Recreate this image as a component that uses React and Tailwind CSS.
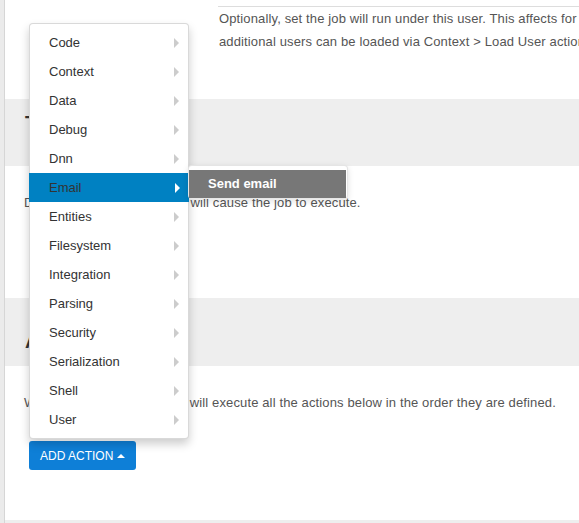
const MENU = [
  "Code",
  "Context",
  "Data",
  "Debug",
  "Dnn",
  "Email",
  "Entities",
  "Filesystem",
  "Integration",
  "Parsing",
  "Security",
  "Serialization",
  "Shell",
  "User",
];

const ACTIVE = "Email";

function Caret({ active }) {
  return (
    <span
      className={`absolute right-[9px] top-1/2 -translate-y-1/2 w-0 h-0 border-y-[5px] border-y-transparent border-l-[5px] ${
        active ? "border-l-white" : "border-l-[#cccccc]"
      }`}
    />
  );
}

function ActionMenu() {
  return (
    <div className="absolute left-[29px] top-[23px] w-[160px] bg-white border border-black/15 rounded-[4px] shadow-[0_5px_10px_rgba(0,0,0,0.2)] py-[4px]">
      {MENU.map((item) => {
        const active = item === ACTIVE;
        return (
          <div
            key={item}
            className={`relative h-[29px] flex items-center pl-[19px] text-[13px] text-[#333333] ${
              active ? "bg-[#0081c2] -mx-px" : ""
            }`}
          >
            <span className={active ? "pl-px" : ""}>{item}</span>
            <Caret active={active} />
          </div>
        );
      })}
    </div>
  );
}

function SubMenu() {
  return (
    <div className="absolute left-[188px] top-[165px] w-[160px] bg-white border border-black/10 rounded-[4px] pt-[4px] pr-px shadow-[0_2px_6px_rgba(0,0,0,0.12)]">
      <div className="h-[28px] flex items-center pl-[19px] bg-[#777777] text-white font-bold text-[13px]">
        Send email
      </div>
    </div>
  );
}

export default function App() {
  return (
    <div className="relative w-full h-[523px] overflow-hidden bg-white flex font-['Liberation_Sans',Arial,sans-serif] whitespace-nowrap">
      <div className="w-[4px] shrink-0 bg-[#ebebeb]" />
      <div className="flex-1 min-w-0 flex flex-col border-l border-[#d6d6d6]">
        <div className="h-[99px]">
          <div className="ml-[213px] mt-[6px] border-t border-[#dddddd] pl-px">
            <p className="text-[13px] leading-[23px] tracking-[0.13px] text-[#555555]">
              Optionally, set the job will run under this user. This affects
              for
            </p>
            <p className="text-[13px] leading-[23px] tracking-[0.13px] text-[#555555]">
              additional users can be loaded via Context &gt; Load User action
            </p>
          </div>
        </div>

        <div className="h-[67px] bg-[#eeeeee] pl-[20px] pt-[14px]">
          <h2 className="text-[20px] leading-none font-bold text-[#333333]">
            Triggers
          </h2>
        </div>

        <div className="h-[132px] px-[19px] pt-[25px]">
          <p className="text-[13px] leading-[23px] tracking-[0.13px] text-[#555555]">
            Defines the job triggers that will cause the job to execute.
          </p>
        </div>

        <div className="h-[68px] bg-[#eeeeee] pl-[20px] pt-[33px]">
          <h2 className="text-[20px] leading-none font-bold text-[#333333]">
            Actions
          </h2>
        </div>

        <div className="h-[154px] px-[19px] pt-[25px]">
          <p className="text-[13px] leading-[23px] tracking-[0.13px] text-[#555555]">
            When the job is triggered, it will execute all the actions below in
            the order they are defined.
          </p>
          <button className="mt-[27px] ml-[5px] h-[29px] w-[107px] flex items-center pl-[11px] rounded-[3px] bg-[#0e7fd7] text-white text-[12px] uppercase">
            Add Action
            <span className="ml-[4px] w-0 h-0 border-x-[4px] border-x-transparent border-b-[4px] border-b-white" />
          </button>
        </div>

        <div className="flex-1 bg-[#eeeeee]" />
      </div>

      <ActionMenu />
      <SubMenu />
    </div>
  );
}
